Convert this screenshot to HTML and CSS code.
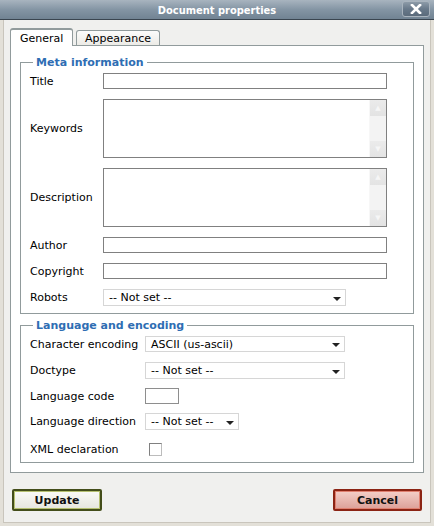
FILE: index.html
```html
<!DOCTYPE html>
<html>
<head>
<meta charset="utf-8">
<title>Document properties</title>
<link rel="stylesheet" href="styles.css">
</head>
<body>
<div class="window">
  <div class="titlebar">
    <span class="title">Document properties</span>
    <span class="close"><svg width="12" height="10" viewBox="0 0 12 10"><path d="M2 1 L10 9 M10 1 L2 9" stroke="#fff" stroke-width="2.6" stroke-linecap="square" fill="none"/></svg></span>
  </div>
  <div class="body">
    <div class="tabs">
      <div class="tab active">General</div>
      <div class="tab">Appearance</div>
    </div>
    <div class="panel">
      <fieldset class="group meta">
        <legend>Meta information</legend>
        <div class="grid grid-meta">
          <label class="lbl">Title</label>
          <div class="input w-full"></div>
          <label class="lbl">Keywords</label>
          <div class="textarea w-full"><div class="ta-text"></div><div class="sb"><div class="sb-btn">&#9650;</div><div class="sb-track"></div><div class="sb-btn">&#9660;</div></div></div>
          <label class="lbl">Description</label>
          <div class="textarea w-full"><div class="ta-text"></div><div class="sb"><div class="sb-btn">&#9650;</div><div class="sb-track"></div><div class="sb-btn">&#9660;</div></div></div>
          <label class="lbl">Author</label>
          <div class="input w-full"></div>
          <label class="lbl">Copyright</label>
          <div class="input w-full"></div>
          <label class="lbl">Robots</label>
          <div class="select w-robots"><span>-- Not set --</span><span class="arrow"></span></div>
        </div>
      </fieldset>
      <fieldset class="group lang">
        <legend>Language and encoding</legend>
        <div class="grid grid-lang">
          <label class="lbl">Character encoding</label>
          <div class="select w-enc first"><span>ASCII (us-ascii)</span><span class="arrow"></span></div>
          <label class="lbl">Doctype</label>
          <div class="select w-enc tall"><span>-- Not set --</span><span class="arrow"></span></div>
          <label class="lbl">Language code</label>
          <div class="input w-code"></div>
          <label class="lbl">Language direction</label>
          <div class="select w-dir tall"><span>-- Not set --</span><span class="arrow"></span></div>
          <label class="lbl bottom">XML declaration</label>
          <div class="checkrow bottom"><span class="checkbox"></span></div>
        </div>
      </fieldset>
    </div>
    <div class="buttons">
      <button class="btn update">Update</button>
      <button class="btn cancel">Cancel</button>
    </div>
  </div>
</div>
</body>
</html>
```
FILE: styles.css
```css
html, body {
  margin: 0;
  padding: 0;
}
body {
  width: 434px;
  height: 526px;
  background: #f0f0ee;
  font-family: "DejaVu Sans", Verdana, sans-serif;
  font-size: 11px;
  color: #000;
  overflow: hidden;
}
.window {
  width: 434px;
  height: 526px;
  display: flex;
  flex-direction: column;
  box-sizing: border-box;
}
.titlebar {
  height: 20px;
  box-sizing: border-box;
  border-bottom: 1px solid #3a4550;
  background: linear-gradient(#a8b4bf, #8495a4 50%, #718393);
  display: flex;
  align-items: center;
  justify-content: center;
  position: relative;
}
.title {
  color: #fff;
  font-family: "DejaVu Sans Condensed", "DejaVu Sans", sans-serif;
  font-weight: bold;
  font-size: 11px;
  margin-top: 1px;
}
.close {
  position: absolute;
  right: 4px;
  top: 1px;
  width: 28px;
  height: 16px;
  box-sizing: border-box;
  border: 1px solid #a9b4be;
  border-radius: 3px;
  background: linear-gradient(#8d9ba8, #68798a 50%, #5b6b7b);
  display: flex;
  align-items: center;
  justify-content: center;
}
.body {
  flex: 1;
  box-sizing: border-box;
  border-left: 3px solid #e3e0d8;
  border-right: 3px solid #e3e0d8;
  border-bottom: 3px solid #e3e0d8;
  box-shadow: inset 1px 0 0 #c9c5bc, inset -1px 0 0 #c9c5bc, inset 0 -1px 0 #c9c5bc;
  padding: 8px 7px 0 7px;
  display: flex;
  flex-direction: column;
}
.tabs {
  display: flex;
  align-items: flex-end;
  height: 17px;
  gap: 3px;
  position: relative;
  z-index: 1;
}
.tab {
  box-sizing: border-box;
  border: 1px solid #919b9c;
  border-bottom: none;
  border-radius: 3px 3px 0 0;
  background: linear-gradient(#fcfcfb, #ecebe6);
  height: 15px;
  padding: 1px 8px 0 8px;
  line-height: 14px;
}
.tab.active {
  background: #fff;
  border-top: 2px solid #919b9c;
  line-height: 15px;
  padding: 1px 9px 0 9px;
  width: 63px;
  margin-bottom: -1px;
  height: 18px;
}
.panel {
  box-sizing: border-box;
  height: 428px;
  background: #fff;
  border: 1px solid #919b9c;
  padding: 10px 9px 0 9px;
}
.group {
  margin: 0;
  border: 1px solid #919b9c;
  padding: 4px 9px 7px 9px;
}
.group legend {
  color: #2e6db3;
  font-weight: bold;
  padding: 0 3px;
  margin-left: 3px;
}
.lang {
  margin-top: 5px;
  padding-bottom: 6px;
}
.grid {
  display: grid;
  grid-template-columns: 73px auto;
  align-items: center;
  justify-items: start;
}
.grid-meta {
  grid-template-rows: 16px 59px 59px 16px 16px 17px;
  row-gap: 10px;
}
.grid-lang {
  grid-template-columns: 115px auto;
  grid-template-rows: 17px 17px 16px 17px 17px;
  row-gap: 9px;
}
.grid-lang .first { align-self: start; }
.grid-lang .bottom { align-self: end; }
.lbl {
  white-space: nowrap;
  line-height: 13px;
}
.input {
  box-sizing: border-box;
  height: 16px;
  border: 1px solid #808080;
  background: #fff;
}
.w-full { width: 284px; }
.w-code { width: 34px; border-color: #8e8e8e; }
.textarea {
  box-sizing: border-box;
  height: 59px;
  border: 1px solid #808080;
  display: flex;
  justify-content: space-between;
}
.ta-text { flex: 1; }
.sb {
  width: 16px;
  background: #f3f3f3;
  display: flex;
  flex-direction: column;
  border-left: 1px solid #f7f7f7;
}
.sb-btn {
  height: 16px;
  background: linear-gradient(#ebebeb, #e3e3e3);
  color: #f6f6f6;
  font-size: 7px;
  line-height: 16px;
  text-align: center;
}
.sb-track { flex: 1; }
.select {
  box-sizing: border-box;
  height: 16px;
  border: 1px solid #d6d6d6;
  background: #fff;
  display: flex;
  align-items: center;
  justify-content: space-between;
  padding: 0 4px 0 5px;
}
.select.tall { height: 17px; }
.w-robots { width: 243px; height: 17px; }
.w-enc { width: 200px; }
.w-dir { width: 94px; }
.arrow {
  width: 0;
  height: 0;
  border-left: 4px solid transparent;
  border-right: 4px solid transparent;
  border-top: 4px solid #222;
  margin-top: 2px;
}
.checkrow {
  padding-left: 4px;
  display: flex;
}
.checkbox {
  display: block;
  width: 13px;
  height: 13px;
  box-sizing: border-box;
  border: 1px solid #bcbcbc;
  border-top-color: #808080;
  border-left-color: #808080;
  background: #fff;
}
.buttons {
  display: flex;
  justify-content: space-between;
  padding: 16px 2px 0 2px;
}
.btn {
  width: 90px;
  height: 22px;
  box-sizing: border-box;
  font-family: "DejaVu Sans", Verdana, sans-serif;
  font-weight: bold;
  font-size: 11px;
  padding: 0;
  border-radius: 2px;
  cursor: pointer;
}
.update {
  border: 2px solid #434d1a;
  box-shadow: inset 0 0 0 1px #b5c070;
  background: linear-gradient(#fafaf6, #e6e6de);
  color: #111;
}
.cancel {
  width: 89px;
  border: 2px solid #8b2414;
  box-shadow: inset 0 0 0 1px #e08070;
  background: linear-gradient(#f4cfc8, #dca098);
  color: #111;
}
```
